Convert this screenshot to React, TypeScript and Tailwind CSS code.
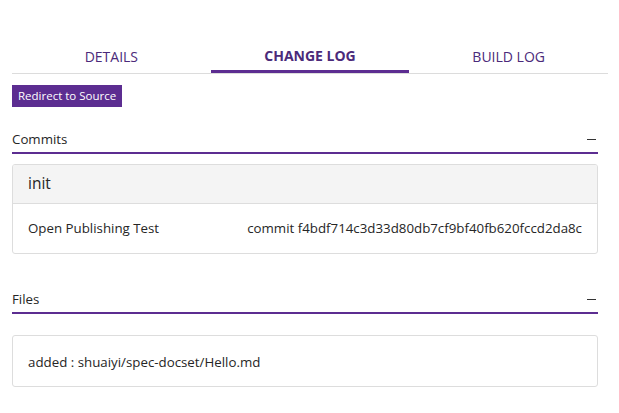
import React from "react";

export default function App() {
  return (
    <div className="w-[619px] h-[413px] bg-white text-[#262626]" style={{ fontFamily: '"Open Sans", "Noto Sans", sans-serif' }}>
      <div className="pt-[40px] pl-[12px] pr-[11px]">
        <div className="flex border-b border-[#dcdcdc] text-[14px] text-[#4b2a7a]">
          <div className="flex-1 h-[33px] flex items-center justify-center pb-[1px]">DETAILS</div>
          <div className="flex-1 h-[33px] flex items-center justify-center font-bold border-b-[3px] border-[#5c2d91] mb-[-1px]">CHANGE LOG</div>
          <div className="flex-1 h-[33px] flex items-center justify-center pb-[1px]">BUILD LOG</div>
        </div>
      </div>
      <div className="px-[12px] pr-[21px]">
        <div className="mt-[11px] flex">
          <span className="flex items-center h-[22px] px-[6px] bg-[#5c2d91] text-white text-[11.5px]">Redirect to Source</span>
        </div>
        <div className="mt-[23px] flex items-start justify-between h-[24px] border-b-2 border-[#5c2d91] text-[13.3px] leading-[18px]">
          <span>Commits</span>
          <span className="w-[9px] h-[1px] bg-[#333] mr-[2px] mt-[9px]" />
        </div>
        <div className="mt-[10px] border border-[#dddddd] rounded-[3px] overflow-hidden">
          <div className="h-[39px] bg-[#f4f4f4] border-b border-[#dddddd] flex items-center px-[15px] text-[15.5px]">init</div>
          <div className="h-[49px] flex items-center justify-between px-[15px] text-[13.3px]">
            <span>Open Publishing Test</span>
            <span>commit f4bdf714c3d33d80db7cf9bf40fb620fccd2da8c</span>
          </div>
        </div>
        <div className="mt-[36px] flex items-start justify-between h-[24px] border-b-2 border-[#5c2d91] text-[13.3px] leading-[18px]">
          <span>Files</span>
          <span className="w-[9px] h-[1px] bg-[#333] mr-[2px] mt-[9px]" />
        </div>
        <div className="mt-[21px] h-[52px] border border-[#dddddd] rounded-[3px] flex items-center px-[15px] text-[13.3px] pt-[3px]">
          added : shuaiyi/spec-docset/Hello.md
        </div>
      </div>
    </div>
  );
}
